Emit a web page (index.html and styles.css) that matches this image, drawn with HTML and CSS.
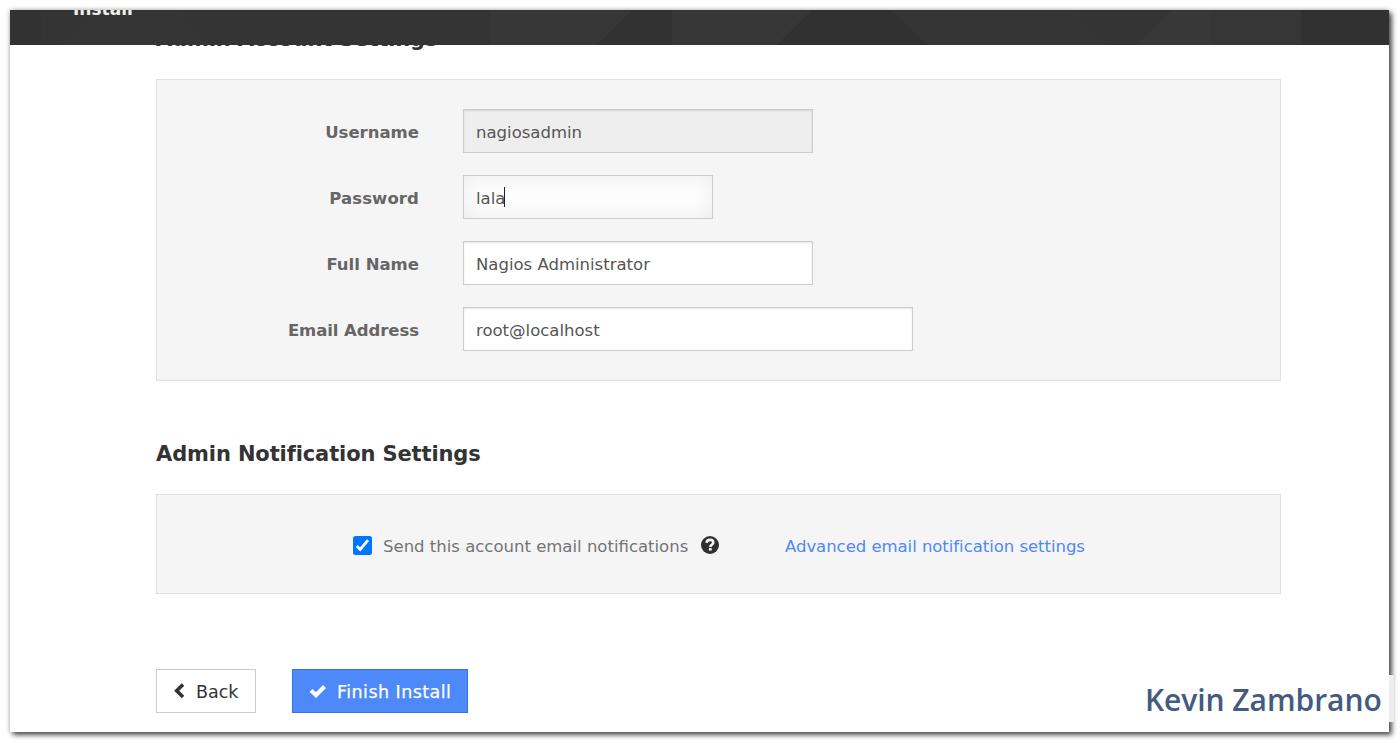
FILE: index.html
```html
<!DOCTYPE html>
<html lang="en">
<head>
<meta charset="utf-8">
<title>Install</title>
<link rel="stylesheet" href="styles.css">
</head>
<body>
<div class="window">
  <header class="topbar">
    <svg class="topbar-pattern" width="1379" height="35" viewBox="0 0 1379 35" aria-hidden="true">
      <rect width="1379" height="35" fill="#343434"/>
      <path d="M0 20L17 35H0zM0 0H31V35H17L0 20z" fill="#323232"/>
      <path d="M86 0H165L200 35H51z" fill="#353535"/>
      <path d="M481 0H622L587 35H481z" fill="#373737"/>
      <path d="M622 0H662V35H587z" fill="#323232"/>
      <path d="M662 0H802L767 35H662z" fill="#373737"/>
      <path d="M802 0H882L917 35H767z" fill="#313131"/>
      <path d="M882 0H1064L1099 35H917z" fill="#353535"/>
      <path d="M1162 0H1201V35H1127z" fill="#383838"/>
      <path d="M1201 0H1291V35H1201z" fill="#363636"/>
      <path d="M1291 0H1379V35H1291z" fill="#313131"/>
    </svg>
    <span class="topbar-title">Install</span>
  </header>
  <main class="content">
    <div class="heading-clip"><h2 class="heading heading-account">Admin Account Settings</h2></div>
    <section class="panel form">
      <div class="row"><label class="label">Username</label><div class="input medium disabled">nagiosadmin</div></div>
      <div class="row"><label class="label password">Password</label><div class="input small focused">lala<i class="caret"></i></div></div>
      <div class="row"><label class="label">Full Name</label><div class="input medium">Nagios Administrator</div></div>
      <div class="row"><label class="label email">Email Address</label><div class="input large">root@localhost</div></div>
    </section>
    <h2 class="heading heading-notify">Admin Notification Settings</h2>
    <section class="panel notify">
      <svg class="checkbox" width="19" height="19" viewBox="0 0 19 19"><rect width="19" height="19" rx="2.5" fill="#0075ff"/><path d="M3.8 10L7.2 13.5L15 4.2" fill="none" stroke="#fff" stroke-width="2.8"/></svg>
      <span class="notify-text">Send this account email notifications</span>
      <svg class="help" width="18" height="18" viewBox="0 0 18 18"><circle cx="9" cy="9" r="9" fill="#303030"/><path d="M5.6 6.9C5.8 4.8 7.2 3.9 9 3.9C11 3.9 12.3 5 12.3 6.6C12.3 8.7 9.3 8.8 9.3 11" fill="none" stroke="#f4f4f4" stroke-width="2.6"/><path d="M7.9 12H10.7V14.6H7.9z" fill="#f4f4f4"/></svg>
      <a class="advanced">Advanced email notification settings</a>
    </section>
    <div class="actions">
      <button class="button back"><svg width="11" height="16" viewBox="0 0 11 16"><path d="M9 1.5L2.7 7.8L9 14" fill="none" stroke="#333" stroke-width="3.6"/></svg><span>Back</span></button>
      <button class="button finish"><svg width="18" height="14" viewBox="0 0 18 14"><path d="M2 6.5L7 11L15.5 2.5" fill="none" stroke="#fff" stroke-width="4.2"/></svg><span>Finish Install</span></button>
    </div>
  </main>
</div>
<div class="signature"><span>Kevin Zambrano</span></div>
</body>
</html>
```
FILE: styles.css
```css
* { box-sizing: border-box; }
body {
  margin: 0;
  padding: 10px;
  width: 1400px;
  height: 743px;
  overflow: hidden;
  background: #fff;
  font-family: "DejaVu Sans", Verdana, sans-serif;
  font-size: 16.5px;
  color: #666;
}
.window {
  width: 1379px;
  height: 722px;
  background: #fff;
  box-shadow: 3px 3px 5px rgba(0, 0, 0, .65), 0 0 5px rgba(0, 0, 0, .3);
}
.topbar {
  position: relative;
  height: 35px;
  overflow: hidden;
  background: #343434;
}
.topbar-pattern { display: block; }
.topbar-title {
  position: absolute;
  left: 63px;
  top: -11px;
  font-size: 17px;
  line-height: 20px;
  font-weight: bold;
  color: #eee;
}
.content { padding: 0 108px 0 146px; }
.heading {
  margin: 0;
  font-size: 21px;
  line-height: 26px;
  color: #333;
  white-space: nowrap;
}
.heading-clip { height: 34px; overflow: hidden; }
.heading-account { margin-top: -19px; letter-spacing: -.15px; }
.heading-notify { margin: 60px 0 27px; letter-spacing: -.12px; }
.panel {
  background: #f5f5f5;
  border: 1px solid #e1e1e1;
}
.form {
  height: 302px;
  padding-top: 29px;
  display: flex;
  flex-direction: column;
  gap: 22px;
}
.row { display: flex; align-items: center; gap: 44px; }
.label {
  width: 262px;
  padding-top: 2px;
  text-align: right;
  font-weight: bold;
  white-space: nowrap;
}
.password { letter-spacing: .1px; }
.email { letter-spacing: -.07px; }
.input {
  height: 44px;
  padding: 2px 12px 0;
  display: flex;
  align-items: center;
  background: #fff;
  border: 1px solid #ccc;
  box-shadow: inset 0 1px 2px rgba(0, 0, 0, .1);
  color: #555;
}
.small { width: 250px; }
.medium { width: 350px; }
.large { width: 450px; }
.disabled { background: #eee; }
.focused { background: #fdfdfd; box-shadow: inset 0 0 20px rgba(0, 0, 0, .07); }
.caret { width: 1px; height: 20px; margin: -3px 0 0 -1px; background: #222; }
.notify {
  height: 100px;
  padding: 2px 0 0 196px;
  display: flex;
  align-items: center;
  white-space: nowrap;
}
.notify-text { width: 305px; margin: 0 13px 0 11px; padding-top: 2px; color: #737373; }
.help { margin-right: 66px; margin-top: -1px; }
.advanced { padding-top: 2px; color: #4d89f9; letter-spacing: -.04px; }
.actions { margin-top: 75px; display: flex; gap: 36px; }
.button {
  height: 44px;
  padding: 0 0 0 17px;
  display: flex;
  align-items: center;
  border: 1px solid #ccc;
  background: #fff;
  font: 17.5px "DejaVu Sans", Verdana, sans-serif;
  color: #333;
  white-space: nowrap;
}
.button span { padding-top: 2px; }
.back { width: 100px; gap: 11px; }
.finish {
  width: 176px;
  padding-left: 16px;
  gap: 10px;
  color: #fff;
  background: #4d89f9;
  border-color: #3173ea;
  letter-spacing: .45px;
  -webkit-text-stroke: .25px #fff;
}
.signature {
  position: absolute;
  left: 1138px;
  top: 675px;
  width: 256px;
  height: 47px;
  background: linear-gradient(90deg, #fff 251px, #ededed 251px);
  font: 600 30px/49px "Open Sans", sans-serif;
  letter-spacing: -.05px;
  color: #435b80;
  padding-left: 7px;
  white-space: nowrap;
}
```
